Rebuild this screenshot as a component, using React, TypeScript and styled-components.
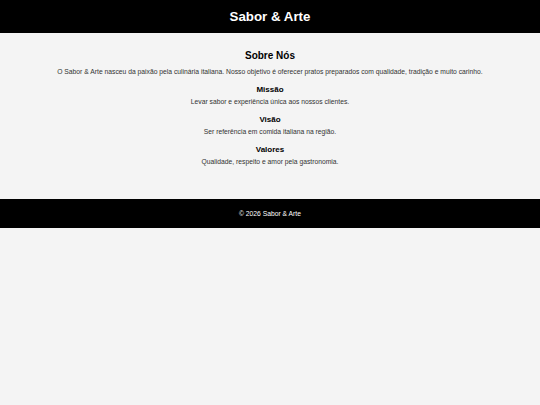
import styled, { createGlobalStyle } from "styled-components";

const GlobalStyle = createGlobalStyle`
    html, body{
        margin:0;
        padding:0;
        background-color:#f4f4f4;
        font-family:"Liberation Sans", Arial, sans-serif;
    }
`;

const Header = styled.header`
    display:flex;
    align-items:center;
    justify-content:center;
    height:33px;
    background-color:#000;
    color:#fff;

    h1{
        margin:0;
        font-size:13.3px;
        font-weight:bold;
    }
`;

const Main = styled.main`
    display:flex;
    flex-direction:column;
    align-items:center;
    padding:17px 20px 32px;
    text-align:center;
    color:#333;
`;

const Title = styled.h2`
    margin:0 0 6px;
    font-size:10px;
    color:#000;
`;

const Text = styled.p`
    margin:0;
    font-size:6.75px;
    line-height:10px;
`;

const Block = styled.section`
    margin-top:8px;

    h3{
        margin:0 0 3px;
        font-size:8px;
        color:#000;
    }
`;

const Footer = styled.footer`
    display:flex;
    align-items:center;
    justify-content:center;
    height:29px;
    background-color:#000;
    color:#fff;
    font-size:6.75px;
`;

const items = [
    { title: "Missão", text: "Levar sabor e experiência única aos nossos clientes." },
    { title: "Visão", text: "Ser referência em comida italiana na região." },
    { title: "Valores", text: "Qualidade, respeito e amor pela gastronomia." },
];

export default function App(){
    return (
        <>
            <GlobalStyle />
            <Header>
                <h1>Sabor &amp; Arte</h1>
            </Header>
            <Main>
                <Title>Sobre Nós</Title>
                <Text>O Sabor &amp; Arte nasceu da paixão pela culinária italiana. Nosso objetivo é oferecer pratos preparados com qualidade, tradição e muito carinho.</Text>
                {items.map((item) => (
                    <Block key={item.title}>
                        <h3>{item.title}</h3>
                        <Text>{item.text}</Text>
                    </Block>
                ))}
            </Main>
            <Footer>© 2026 Sabor &amp; Arte</Footer>
        </>
    )
}
